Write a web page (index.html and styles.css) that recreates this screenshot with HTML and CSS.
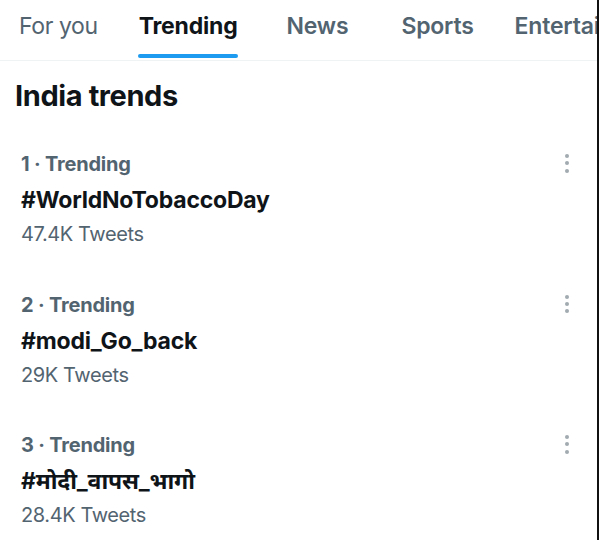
FILE: index.html
```html
<!DOCTYPE html>
<html>
<head>
<meta charset="utf-8">
<link rel="stylesheet" href="styles.css">
</head>
<body>
<div class="page">
  <nav class="tabs">
    <div class="tab regular">For you</div>
    <div class="tab active">Trending<span class="bar"></span></div>
    <div class="tab news">News</div>
    <div class="tab sports">Sports</div>
    <div class="tab">Entertainment</div>
  </nav>
  <h1 class="title">India trends</h1>
  <ul class="trends">
    <li class="trend">
      <div class="info">
        <div class="meta">1 · Trending</div>
        <div class="tag">#WorldNoTobaccoDay</div>
        <div class="count">47.4K Tweets</div>
      </div>
      <div class="more"><span></span><span></span><span></span></div>
    </li>
    <li class="trend">
      <div class="info">
        <div class="meta">2 · Trending</div>
        <div class="tag">#modi_Go_back</div>
        <div class="count">29K Tweets</div>
      </div>
      <div class="more"><span></span><span></span><span></span></div>
    </li>
    <li class="trend">
      <div class="info">
        <div class="meta">3 · Trending</div>
        <div class="tag">#मोदी_वापस_भागो</div>
        <div class="count">28.4K Tweets</div>
      </div>
      <div class="more"><span></span><span></span><span></span></div>
    </li>
  </ul>
</div>
</body>
</html>
```
FILE: styles.css
```css
html, body {
  margin: 0;
  padding: 0;
  background: #fff;
}
body {
  font-family: Inter, Roboto, "Noto Sans", "Liberation Sans", sans-serif;
  color: #0f1419;
}
.page {
  width: 597px;
  height: 540px;
  overflow: hidden;
  border-right: 2px solid #111;
}
.tabs {
  display: flex;
  height: 60px;
  border-bottom: 1px solid #eff3f4;
  white-space: nowrap;
  overflow: hidden;
  padding-left: 19px;
  gap: 41px;
}
.tab {
  position: relative;
  flex: none;
  font-size: 23px;
  font-weight: 600;
  color: #536471;
  line-height: 1;
  padding-top: 15px;
  letter-spacing: -0.2px;
}
.tab.regular {
  font-weight: 400;
  letter-spacing: -0.4px;
}
.tab.news {
  margin-left: 8px;
}
.tab.sports {
  margin-left: 12px;
}
.tab.active {
  color: #0f1419;
  font-weight: 700;
}
.tab .bar {
  position: absolute;
  left: -1px;
  right: 0;
  bottom: 2px;
  height: 4px;
  border-radius: 2px;
  background: #1d9bf0;
}
.title {
  margin: 0 0 26px;
  padding: 18px 0 0 15px;
  font-size: 29px;
  font-weight: 700;
  line-height: 34px;
  letter-spacing: -0.4px;
}
.trends {
  list-style: none;
  margin: 0;
  padding: 0;
}
.trend {
  display: flex;
  justify-content: space-between;
  box-sizing: border-box;
  height: 140.5px;
  padding: 12px 28px 0 21px;
}
.info {
  display: flex;
  flex-direction: column;
}
.meta {
  font-size: 20px;
  font-weight: 700;
  color: #536471;
  line-height: 26px;
  letter-spacing: -0.2px;
}
.tag {
  font-size: 23px;
  font-weight: 700;
  color: #0f1419;
  line-height: 30px;
  margin-top: 8px;
  letter-spacing: -0.2px;
}
.count {
  font-size: 20px;
  color: #536471;
  line-height: 26px;
  margin-top: 6px;
  letter-spacing: -0.4px;
}
.more {
  display: flex;
  flex-direction: column;
  gap: 3.3px;
  padding-top: 3px;
}
.more span {
  width: 4px;
  height: 4px;
  border-radius: 50%;
  background: #a2abb0;
}
```
